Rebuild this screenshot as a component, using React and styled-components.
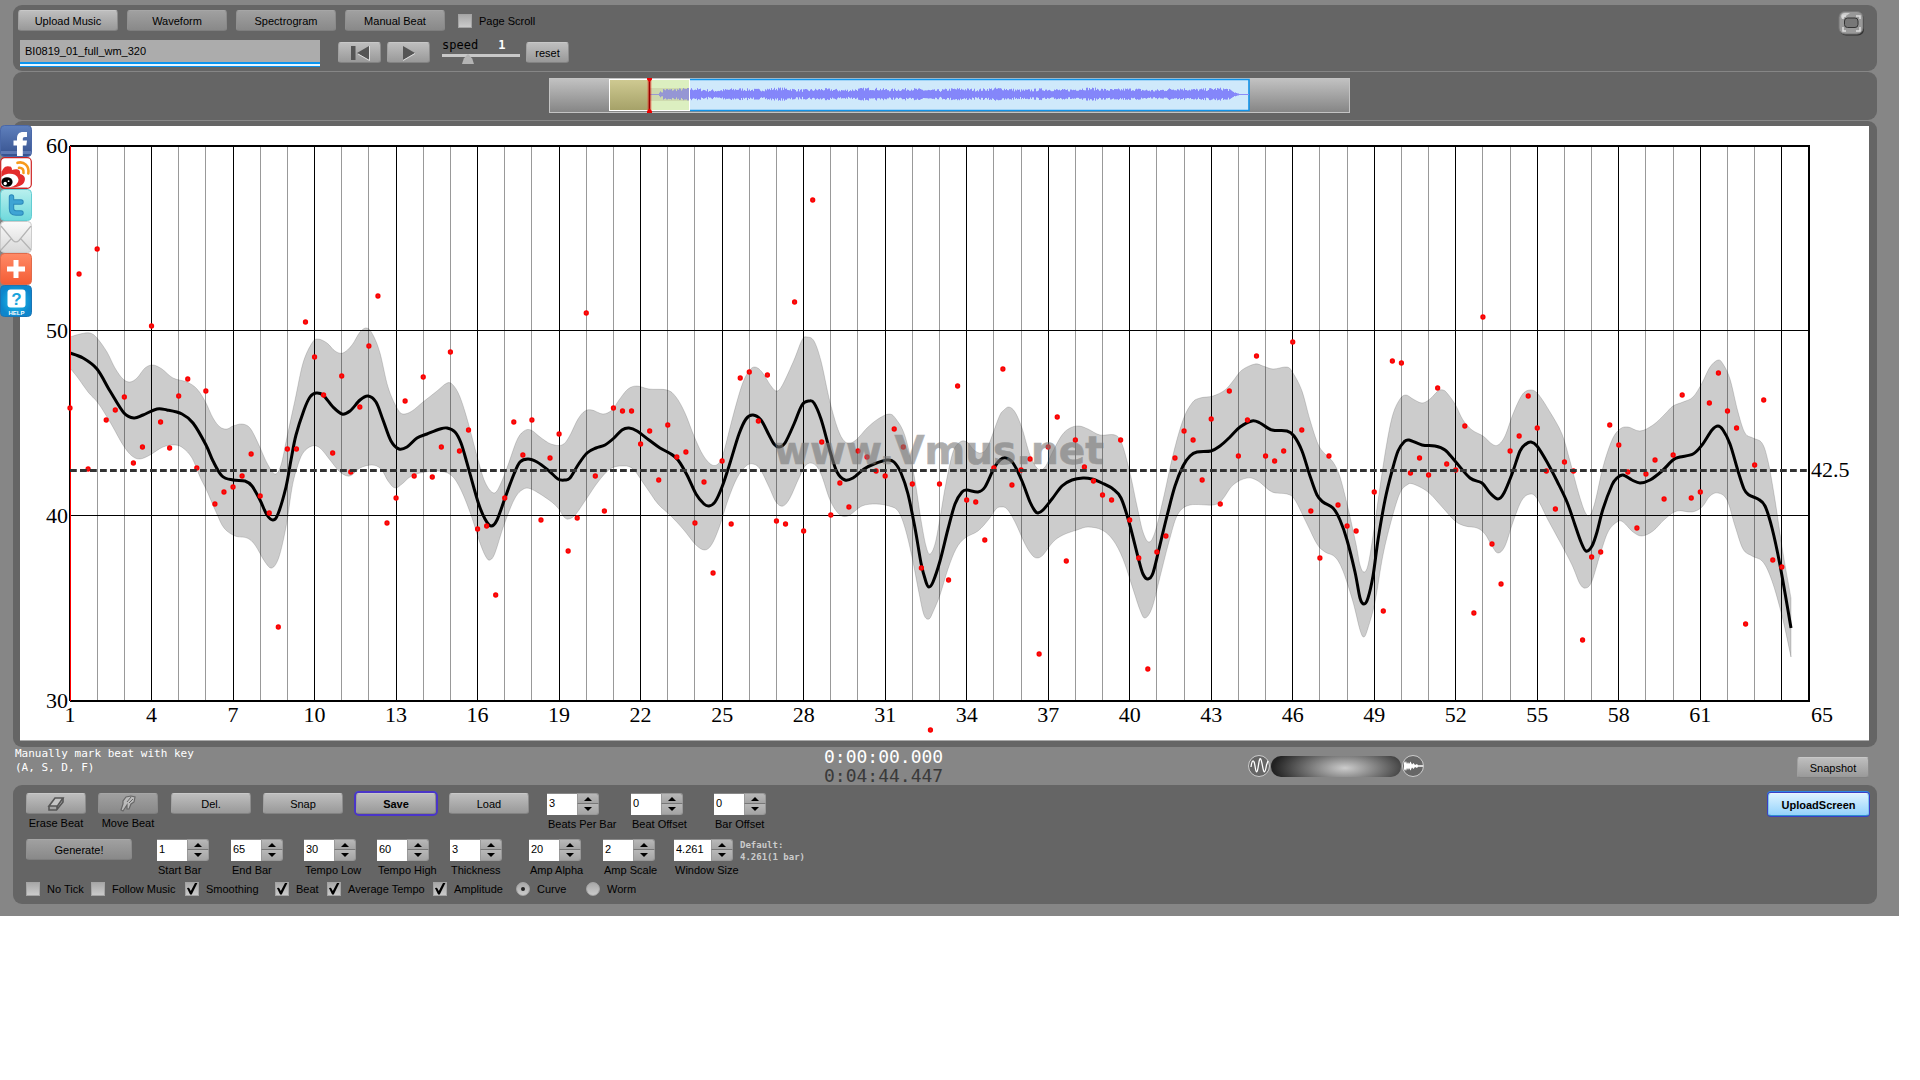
import React, { useState } from 'react';
import styled, { createGlobalStyle, css } from 'styled-components';

const GlobalStyle = createGlobalStyle`
  * {
    box-sizing: border-box;
  }
  body {
    margin: 0;
    background: #fff;
    color: #000;
    font-family: "Liberation Sans", Arial, sans-serif;
    font-size: 11px;
  }
  button, input {
    font: inherit;
    color: inherit;
    margin: 0;
  }
`;

// ---------- Chart data ----------

const beats = [
  408, 274, 469, 249, 420, 410, 397, 463, 447, 326, 422, 448, 396, 379, 468, 391,
  504, 492, 487, 476, 454, 496, 513, 627, 449, 449, 322, 357, 395, 453, 376, 472,
  407, 346, 296, 523, 498, 401, 476, 377, 477, 447, 352, 451, 430, 529, 526, 595,
  498, 422, 455, 420, 520, 458, 434, 551, 518, 313, 476, 511, 408, 411, 411, 444,
  431, 480, 425, 457, 452, 523, 482, 573, 461, 524, 378, 372, 421, 375, 521, 524,
  302, 531, 200, 442, 515, 483, 507, 451, 457, 471, 476, 429, 447, 484, 568, 730,
  484, 580, 386, 500, 502, 540, 468, 369, 485, 470, 459, 654, 447, 417, 561, 440,
  467, 481, 495, 500, 440, 520, 558, 669, 552, 536, 458, 431, 440, 480, 419, 504,
  391, 456, 420, 356, 456, 461, 451, 342, 430, 511, 558, 456, 505, 526, 531, null,
  492, 611, 361, 363, 473, 458, 475, 388, 464, 470, 426, 613, 317, 544, 584, 451,
  436, 396, 428, 471, 509, 462, 471, 640, 557, 552, 425, 445, 472, 528, 474, 460,
  499, 455, 395, 498, 492, 403, 373, 411, 428, 624, 465, 400, 560, 567,
];

const meanLine = [
  70, 353, 83, 358, 97, 369, 110, 391, 124, 413, 134, 418, 143, 415, 157, 409, 167, 410,
  182, 414, 193, 423, 206, 445, 213, 461, 222, 476, 233, 480, 245, 481, 252, 486, 260, 500,
  267, 515, 273, 520, 278, 514, 286, 487, 291, 460, 296, 435, 304, 410, 310, 397, 316, 393,
  323, 395, 333, 407, 342, 414, 350, 411, 360, 400, 368, 396, 376, 402, 383, 420, 391, 441,
  399, 449, 407, 447, 417, 438, 427, 434, 440, 429, 447, 428, 455, 432, 461, 443, 467, 463,
  478, 502, 485, 519, 491, 526, 497, 520, 505, 498, 514, 474, 520, 462, 528, 459, 537, 462,
  548, 470, 558, 479, 565, 480, 570, 478, 578, 465, 587, 453, 596, 448, 605, 445, 614, 438,
  622, 430, 629, 428, 637, 431, 649, 440, 660, 448, 671, 454, 678, 460, 687, 475, 696, 494,
  704, 504, 709, 506, 715, 502, 722, 487, 730, 463, 739, 434, 746, 419, 753, 415, 761, 420,
  769, 435, 774, 444, 779, 447, 785, 443, 794, 424, 802, 405, 809, 401, 814, 403, 821, 419,
  830, 451, 837, 472, 845, 480, 853, 478, 864, 469, 874, 464, 887, 460, 894, 462, 901, 473,
  908, 494, 915, 528, 921, 563, 926, 582, 929, 587, 933, 582, 940, 561, 948, 529, 955, 504,
  962, 492, 967, 490, 978, 492, 985, 487, 994, 468, 1000, 460, 1006, 458, 1013, 463,
  1022, 481, 1030, 502, 1035, 511, 1038, 513, 1043, 510, 1052, 499, 1062, 486, 1072, 480,
  1083, 478, 1092, 479, 1102, 483, 1113, 489, 1121, 498, 1129, 522, 1138, 557, 1143, 574,
  1148, 579, 1153, 573, 1159, 549, 1167, 516, 1175, 486, 1183, 466, 1190, 456, 1197, 452,
  1211, 451, 1220, 446, 1230, 437, 1240, 427, 1252, 421, 1260, 423, 1272, 430, 1287, 431,
  1294, 436, 1302, 451, 1310, 476, 1317, 495, 1323, 502, 1333, 508, 1340, 520, 1347, 540,
  1355, 572, 1360, 598, 1364, 604, 1368, 598, 1373, 576, 1378, 540, 1385, 500, 1392, 471,
  1398, 451, 1404, 442, 1409, 440, 1422, 445, 1435, 446, 1445, 450, 1455, 461, 1470, 478,
  1482, 483, 1490, 493, 1498, 499, 1504, 493, 1512, 474, 1520, 451, 1526, 444, 1531, 442,
  1537, 446, 1547, 462, 1557, 481, 1567, 502, 1575, 525, 1581, 542, 1586, 551, 1592, 546,
  1597, 532, 1603, 509, 1612, 485, 1617, 478, 1623, 475, 1632, 480, 1640, 483, 1650, 480,
  1662, 471, 1673, 460, 1680, 457, 1693, 454, 1702, 445, 1712, 430, 1718, 426, 1723, 430,
  1730, 444, 1738, 471, 1744, 489, 1749, 495, 1758, 499, 1765, 506, 1772, 528, 1780, 565,
  1791, 628,
];

const upperLine = [
  70, 337, 80, 334, 90, 333, 97, 338, 107, 352, 115, 368, 123, 379, 130, 382, 137, 378,
  145, 368, 153, 365, 162, 369, 173, 378, 187, 382, 197, 389, 205, 401, 213, 418, 220, 427,
  227, 429, 233, 426, 242, 424, 250, 428, 258, 443, 267, 463, 275, 474, 281, 465, 287, 437,
  295, 400, 303, 363, 312, 343, 318, 339, 327, 343, 335, 351, 343, 353, 352, 345, 360, 332,
  367, 328, 373, 335, 380, 353, 388, 387, 397, 408, 403, 414, 412, 411, 423, 402, 437, 391,
  447, 383, 453, 385, 460, 397, 468, 422, 477, 456, 485, 482, 494, 493, 501, 483, 508, 465,
  517, 440, 524, 431, 531, 430, 540, 437, 551, 444, 562, 445, 569, 437, 578, 419, 585, 411,
  592, 410, 603, 414, 612, 410, 619, 400, 628, 389, 637, 386, 649, 389, 667, 390, 676, 397,
  685, 413, 694, 436, 703, 455, 712, 465, 719, 463, 724, 451, 733, 416, 742, 385, 749, 371,
  755, 367, 762, 372, 771, 386, 777, 391, 783, 384, 794, 360, 802, 340, 807, 337, 814, 341,
  821, 361, 830, 402, 839, 432, 847, 443, 856, 440, 867, 428, 878, 419, 889, 414, 896, 419,
  905, 436, 914, 475, 921, 520, 926, 546, 930, 554, 935, 544, 940, 518, 946, 483, 953, 452,
  960, 442, 967, 442, 974, 450, 981, 453, 988, 446, 999, 417, 1004, 410, 1009, 407, 1015, 412,
  1022, 428, 1030, 455, 1038, 469, 1045, 467, 1053, 451, 1062, 435, 1070, 428, 1079, 426,
  1088, 429, 1100, 435, 1115, 435, 1122, 444, 1130, 473, 1137, 506, 1143, 532, 1149, 542,
  1155, 532, 1163, 500, 1173, 455, 1183, 420, 1192, 403, 1200, 398, 1213, 396, 1225, 390,
  1233, 381, 1242, 370, 1255, 364, 1263, 366, 1273, 369, 1287, 367, 1293, 373, 1302, 391,
  1310, 420, 1318, 444, 1325, 454, 1333, 462, 1340, 477, 1348, 508, 1356, 544, 1360, 565,
  1364, 572, 1368, 565, 1373, 536, 1380, 487, 1387, 442, 1393, 414, 1400, 399, 1406, 395,
  1413, 399, 1422, 403, 1430, 399, 1438, 391, 1443, 390, 1447, 393, 1455, 404, 1463, 420,
  1472, 430, 1483, 436, 1492, 444, 1498, 445, 1505, 436, 1513, 414, 1522, 395, 1530, 390,
  1538, 394, 1550, 412, 1562, 434, 1570, 461, 1578, 491, 1585, 512, 1590, 515, 1595, 502,
  1603, 467, 1612, 440, 1620, 429, 1628, 427, 1640, 431, 1653, 425, 1665, 414, 1673, 406,
  1683, 402, 1693, 397, 1702, 383, 1710, 367, 1718, 360, 1723, 364, 1730, 379, 1738, 412,
  1745, 433, 1753, 438, 1762, 443, 1768, 461, 1775, 500, 1783, 553, 1791, 598,
];

const lowerLine = [
  70, 368, 78, 378, 88, 392, 98, 403, 110, 422, 123, 445, 132, 456, 140, 459, 150, 455,
  163, 447, 175, 445, 183, 448, 192, 458, 200, 477, 206, 489, 216, 512, 224, 528, 235, 536,
  247, 538, 255, 545, 265, 562, 272, 568, 279, 557, 286, 527, 292, 488, 297, 468, 303, 453,
  312, 446, 320, 448, 330, 460, 340, 472, 350, 476, 360, 468, 372, 465, 381, 469, 388, 481,
  395, 488, 402, 484, 410, 477, 420, 473, 437, 471, 451, 475, 461, 490, 471, 515, 480, 543,
  486, 557, 490, 560, 495, 553, 504, 525, 514, 500, 522, 490, 531, 489, 549, 500, 558, 508,
  564, 517, 569, 519, 576, 514, 587, 498, 598, 482, 610, 469, 622, 466, 633, 469, 646, 487,
  658, 504, 671, 516, 683, 529, 696, 545, 705, 550, 712, 544, 719, 528, 728, 500, 737, 478,
  746, 466, 753, 464, 760, 469, 769, 487, 776, 502, 783, 506, 790, 498, 799, 478, 806, 465,
  814, 464, 821, 474, 830, 500, 839, 514, 848, 516, 862, 506, 876, 504, 889, 506, 898, 511,
  905, 528, 912, 557, 919, 593, 924, 615, 929, 619, 933, 612, 940, 595, 948, 569, 956, 549,
  965, 538, 978, 531, 989, 519, 996, 509, 1001, 507, 1007, 509, 1015, 522, 1025, 544,
  1032, 555, 1037, 558, 1043, 555, 1053, 542, 1063, 535, 1077, 530, 1088, 527, 1102, 530,
  1113, 540, 1123, 559, 1133, 589, 1140, 610, 1145, 618, 1152, 608, 1160, 577, 1170, 538,
  1178, 514, 1190, 505, 1213, 505, 1222, 500, 1233, 485, 1247, 478, 1258, 481, 1272, 492,
  1287, 494, 1295, 500, 1307, 524, 1317, 544, 1325, 552, 1335, 557, 1343, 571, 1353, 602,
  1360, 630, 1364, 637, 1368, 628, 1375, 602, 1383, 555, 1392, 518, 1400, 493, 1407, 485,
  1413, 484, 1428, 492, 1443, 508, 1455, 521, 1465, 526, 1477, 528, 1485, 534, 1492, 546,
  1498, 553, 1505, 546, 1513, 522, 1522, 500, 1531, 494, 1538, 500, 1548, 520, 1560, 542,
  1572, 565, 1580, 584, 1586, 588, 1592, 581, 1600, 555, 1608, 532, 1617, 522, 1623, 522,
  1633, 532, 1642, 536, 1653, 531, 1665, 519, 1677, 511, 1692, 512, 1702, 507, 1710, 496,
  1718, 493, 1727, 500, 1735, 526, 1743, 549, 1752, 556, 1763, 562, 1772, 581, 1782, 616,
  1791, 657,
];

const toPairs = (flat) => {
  const out = [];
  for (let i = 0; i < flat.length; i += 2) out.push([flat[i], flat[i + 1]]);
  return out;
};

// Catmull-Rom spline through the points
const spline = (pts, start = 'M') => {
  let d = `${start}${pts[0][0]} ${pts[0][1]}`;
  for (let i = 0; i < pts.length - 1; i++) {
    const p0 = pts[i - 1] || pts[i];
    const p1 = pts[i];
    const p2 = pts[i + 1];
    const p3 = pts[i + 2] || p2;
    const c = [
      p1[0] + (p2[0] - p0[0]) / 6, p1[1] + (p2[1] - p0[1]) / 6,
      p2[0] - (p3[0] - p1[0]) / 6, p2[1] - (p3[1] - p1[1]) / 6,
    ].map((n) => n.toFixed(1));
    d += `C${c[0]} ${c[1]} ${c[2]} ${c[3]} ${p2[0]} ${p2[1]}`;
  }
  return d;
};

const LEFT = 70;
const RIGHT = 1809;
const TOP = 146;
const BOTTOM = 701;
const barX = (bar) => LEFT + ((bar - 1) * (RIGHT - LEFT)) / 64;

const meanPath = spline(toPairs(meanLine));
const bandPath = `${spline(toPairs(upperLine))}${spline(toPairs(lowerLine).reverse(), 'L')}Z`;
const bars = Array.from({ length: 63 }, (_, i) => i + 2);
const barLabels = Array.from({ length: 21 }, (_, i) => 1 + i * 3);

// waveform of the overview strip
const wavePath = () => {
  let d = '';
  let seed = 7;
  for (let x = 110; x < 690; x++) {
    seed = (seed * 16807) % 2147483647;
    const r = seed / 2147483647;
    const swell = 4.6 + 0.8 * Math.sin(x / 7) + 0.6 * Math.sin(x / 17 + 1);
    const fade = x < 114 ? 0.5 : x > 680 ? (692 - x) / 14 : 1;
    const h = Math.max(1, (swell * 0.7 + r * 3) * fade);
    d += `M${x + 0.5} ${(16.5 - h).toFixed(1)}V${(16.5 + h * 0.9).toFixed(1)}`;
  }
  return d;
};

// ---------- Layout ----------

const Page = styled.div`
  padding-right: 21px;
`;

const Player = styled.main`
  position: relative;
  padding: 5px 22px 12px 13px;
  background: #868686;
`;

const Panel = styled.section`
  background: #656565;
  border-radius: 9px;
  margin-bottom: 1px;
`;

const TopPanel = styled(Panel)`
  display: flex;
  justify-content: space-between;
  align-items: flex-start;
  height: 66px;
  padding: 5px 12px 0 5px;
`;

const WavePanel = styled(Panel)`
  display: flex;
  justify-content: center;
  padding: 6px 0 7px 9px;

  svg {
    display: block;
    width: 801px;
    max-width: 100%;
  }
`;

const ChartPanel = styled(Panel)`
  padding: 5px 8px 6px 7px;
  margin-bottom: 0;
`;

const ChartSvg = styled.svg`
  display: block;
  width: 100%;
  height: auto;
  background: #fff;
  border-bottom: 1px solid #aaa;
  font-family: "Liberation Serif", "Times New Roman", serif;
  font-size: 22px;
`;

const Row = styled.div`
  display: flex;
  align-items: center;
  gap: 9px;
`;

const FileRow = styled.div`
  display: flex;
  align-items: flex-start;
  margin-top: 9px;
  padding-left: 2px;
`;

const Transport = styled.div`
  display: flex;
  gap: 6px;
  padding: 2px 12px 0 18px;
`;

const ResetSlot = styled.div`
  padding: 2px 0 0 6px;
`;

// ---------- Controls ----------

const Button = styled.button`
  display: flex;
  align-items: center;
  justify-content: center;
  width: ${({ $width }) => $width}px;
  height: 21px;
  padding: 0;
  border: 1px solid;
  border-color: #c8c8c8 #8c8c8c #828282 #a0a0a0;
  border-radius: 3px;
  background: linear-gradient(#bebebe, #999);
  white-space: nowrap;

  ${({ $dim }) => $dim && css`
    border-color: #a6a6a6 #8a8a8a #7e7e7e #909090;
    background: linear-gradient(#a0a0a0, #898989);
  `}
  ${({ $focus }) => $focus && css`
    font-weight: 700;
    box-shadow: 0 0 0 2px #4a35c8, 0 -1px 0 1px #3c86dc;
  `}
  ${({ $primary }) => $primary && css`
    height: 23px;
    border-color: #e8f6ff #7ec4f0 #2f8fd0;
    background: linear-gradient(#dcf2ff, #95d3fb);
    font-weight: 700;
    box-shadow: 0 0 0 1px #3a3fc4, 0 -1px 0 1px #2f86e0;
  `}
`;

const FileInput = styled.input`
  width: 300px;
  height: 27px;
  padding: 0 5px 4px;
  border: 0;
  border-bottom: 1px solid #0a8fe8;
  background: #acacac;
  box-shadow: inset 0 -2px 0 #e8f6ff, inset 0 -4px 0 #0a95f0;
  outline: none;
`;

const SpeedBox = styled.div`
  width: 78px;
  margin-top: -3px;
`;

const SpeedText = styled.label`
  display: flex;
  gap: 20px;
  height: 14px;
  font: 12px/16px "DejaVu Sans Mono", monospace;

  output {
    color: #fff;
    font-weight: 700;
  }
`;

const SpeedRange = styled.input`
  display: block;
  width: 78px;
  height: 14px;
  appearance: none;
  background: linear-gradient(#c8c8c8, #c8c8c8) 0 3px / 100% 3px no-repeat;

  &::-webkit-slider-thumb {
    appearance: none;
    width: 12px;
    height: 10px;
    margin-top: 2px;
    background: #b4b4b4;
    clip-path: polygon(50% 0, 85% 45%, 100% 100%, 0 100%, 15% 45%);
  }
`;

const boxStyle = css`
  appearance: none;
  flex: none;
  width: 14px;
  height: 14px;
  border: 1px solid #a4a4a4;
  background: linear-gradient(#a8a8a8, #cacaca);
`;

const CheckBox = styled.input`
  ${boxStyle}

  &:checked::before {
    content: '';
    display: block;
    width: 12px;
    height: 12px;
    background: #000;
    clip-path: polygon(8% 42%, 25% 40%, 40% 66%, 75% 0, 95% 0, 48% 96%, 34% 96%);
  }
`;

const Radio = styled.input`
  ${boxStyle}
  border-radius: 50%;

  &:checked::before {
    content: '';
    display: block;
    width: 4px;
    height: 4px;
    margin: 4px;
    border-radius: 50%;
    background: #222;
  }
`;

const OptionLabel = styled.label`
  display: flex;
  align-items: center;
  gap: 7px;
  height: 14px;
  padding-left: ${({ $indent }) => $indent || 0}px;
  white-space: nowrap;
`;

const FullscreenButton = styled.button`
  width: 27px;
  height: 25px;
  margin-top: 1px;
  padding: 0;
  border: 0;
  background: none;
`;

const SocialBar = styled.nav`
  position: absolute;
  left: 0;
  top: 125px;
  display: flex;
  flex-direction: column;

  a, svg {
    display: block;
    width: 32px;
    height: 32px;
  }
`;

// ---------- Status line ----------

const StatusBar = styled.div`
  display: grid;
  grid-template-columns: 811fr 424fr 549fr auto;
  height: 38px;
  padding-right: 8px;
`;

const Hint = styled.p`
  margin: 0;
  padding-left: 2px;
  color: #fff;
  font: 11px/14px "DejaVu Sans Mono", monospace;
`;

const Clock = styled.div`
  color: ${({ $total }) => ($total ? '#3a3a3a' : '#fff')};
  font: 18px/19px "DejaVu Sans Mono", monospace;
`;

const ZoomControl = styled.div`
  display: flex;
  align-items: center;

  svg {
    width: 23px;
    height: 24px;
  }
`;

const ZoomRange = styled.input`
  width: 130px;
  height: 21px;
  appearance: none;
  border-radius: 10px;
  background: radial-gradient(ellipse 72px 26px at 74px 12px, #ccc, #777 50%, #222 100%);

  &::-webkit-slider-thumb {
    appearance: none;
    width: 1px;
    height: 1px;
  }
`;

const SnapshotSlot = styled.div`
  padding-top: 10px;
`;

// ---------- Bottom panel ----------

const ControlPanel = styled(Panel)`
  display: flex;
  justify-content: space-between;
  align-items: flex-start;
  margin-bottom: 0;
  padding: 8px 8px 8px 13px;
`;

const ControlGrid = styled.div`
  display: grid;
  grid-template-columns: ${({ $columns }) => $columns};
  height: ${({ $height }) => $height}px;
`;

const Caption = styled.div`
  margin-top: 2px;
  padding-left: ${({ $center }) => ($center ? 0 : 1)}px;
  line-height: 14px;
  text-align: ${({ $center }) => ($center ? 'center' : 'left')};
  white-space: nowrap;
`;

const ToolCell = styled.div`
  width: 60px;
`;

const Field = styled.label`
  display: block;
  width: 52px;
`;

const SpinnerBox = styled.div`
  display: flex;
  width: ${({ $wide }) => ($wide ? 59 : 52)}px;
  height: 22px;

  input {
    flex: 1;
    min-width: 0;
    padding: 0 2px 4px;
    border: 0;
    border-top: 1px solid #888;
    background: #fff;
    appearance: textfield;
    outline: none;
  }
  input::-webkit-inner-spin-button {
    appearance: none;
  }
`;

const Steps = styled.div`
  display: grid;
  grid-template-rows: 1fr 1fr;
  width: 22px;

  button {
    display: flex;
    align-items: center;
    justify-content: center;
    padding: 0;
    border: 1px solid #999;
    background: linear-gradient(#b8b8b8, #a4a4a4);
  }
  button:first-child {
    border-radius: 0 3px 0 0;
    border-bottom-color: #777;
  }
  button:last-child {
    border-top: 0;
    border-radius: 0 0 3px 0;
  }
`;

const DefaultNote = styled.p`
  margin: 0;
  color: #ccc;
  font: 700 9px/12px "DejaVu Sans Mono", monospace;
  white-space: nowrap;
`;

// ---------- Pieces ----------

const Spinner = ({ label, value, wide }) => {
  const [current, setCurrent] = useState(value);
  const step = (by) => setCurrent((v) => Number((v + by).toFixed(3)));

  return (
    <Field>
      <SpinnerBox $wide={wide}>
        <input
          type="number"
          step="any"
          aria-label={label}
          value={current}
          onChange={(e) => setCurrent(Number(e.target.value))}
        />
        <Steps>
          <button type="button" aria-label={`${label} up`} onClick={() => step(1)}>
            <svg width="8" height="4"><path d="M0 4L4 0L8 4Z" /></svg>
          </button>
          <button type="button" aria-label={`${label} down`} onClick={() => step(-1)}>
            <svg width="8" height="4"><path d="M0 0L4 4L8 0Z" /></svg>
          </button>
        </Steps>
      </SpinnerBox>
      <Caption>{label}</Caption>
    </Field>
  );
};

const Check = ({ label, on, indent }) => (
  <OptionLabel $indent={indent}>
    <CheckBox type="checkbox" defaultChecked={on} />
    {label}
  </OptionLabel>
);

const TempoChart = () => (
  <ChartSvg viewBox="20 126 1849 614" role="img" aria-label="Tempo curve">
    <g shapeRendering="crispEdges">
      {bars.map((bar) => (
        <line
          key={bar}
          x1={barX(bar)}
          x2={barX(bar)}
          y1={TOP}
          y2={BOTTOM}
          stroke={bar % 3 === 1 ? '#000' : '#999'}
        />
      ))}
      <path d={`M${LEFT} 330.5H${RIGHT}M${LEFT} 515.5H${RIGHT}`} stroke="#000" />
      <path d={`M${LEFT} ${TOP}H${RIGHT}V${BOTTOM}H${LEFT}`} fill="none" stroke="#000" strokeWidth="2" />
    </g>
    <path d={bandPath} fill="#000" fillOpacity="0.2" stroke="#000" strokeOpacity="0.15" />
    <path d={meanPath} fill="none" stroke="#000" strokeWidth="3" />
    <path d={`M${LEFT} ${TOP}V${BOTTOM}`} stroke="#000" strokeWidth="2" />
    <path d={`M${LEFT + 0.5} ${TOP}V${BOTTOM}`} stroke="#f00" />
    {beats.map((y, i) => y !== null && (
      <circle key={i} cx={LEFT + (i * (RIGHT - LEFT)) / 192} cy={y} r="1.7" fill="#b44" stroke="#f00" strokeWidth="1.9" />
    ))}
    <path d={`M${LEFT} 470.5H${RIGHT}`} stroke="#333" strokeWidth="2.8" strokeDasharray="6.8 3.2" />
    <text
      x="774"
      y="464"
      fill="#787878"
      stroke="#787878"
      strokeWidth="0.6"
      opacity="0.6"
      fontFamily="DejaVu Sans"
      fontWeight="700"
      fontSize="39"
    >
      www.Vmus.net
    </text>
    {[60, 50, 40, 30].map((n) => (
      <text key={n} x="68" y={153 + (60 - n) * 18.5} textAnchor="end">{n}</text>
    ))}
    {barLabels.map((n) => (
      <text key={n} x={barX(n)} y="722" textAnchor="middle">{n}</text>
    ))}
    <text x="1811" y="722">65</text>
    <text x="1811" y="477">42.5</text>
  </ChartSvg>
);

const Overview = () => (
  <svg viewBox="0 0 801 35" role="img" aria-label="Waveform overview">
    <defs>
      <linearGradient id="strip" x2="0" y2="1">
        <stop stopColor="#c2c2c2" />
        <stop offset="1" stopColor="#858585" />
      </linearGradient>
      <linearGradient id="olive" x2="0" y2="1">
        <stop stopColor="#cfca92" />
        <stop offset="1" stopColor="#a5a168" />
      </linearGradient>
    </defs>
    <rect x="0.5" y="0.5" width="800" height="34" fill="url(#strip)" stroke="#c4c4c4" />
    <rect x="61" y="1.5" width="40" height="31" fill="url(#olive)" />
    <rect x="101" y="1.5" width="599" height="31" fill="#cfe9fb" />
    <path d="M141 1.5H700V32.5H141" fill="none" stroke="#1192e8" strokeWidth="1.6" />
    <rect x="101" y="1.5" width="40" height="31" fill="#dcefc0" />
    <path d={wavePath()} stroke="#8486fa" />
    <path d="M101 16.5H115M685 16.5H700" stroke="#8a8cf8" />
    <rect x="101" y="10" width="40" height="13" fill="#b4b48c" fillOpacity="0.35" />
    <rect x="60.5" y="1.5" width="80" height="31" fill="none" stroke="#fff" />
    <path d="M100.5 1V33" stroke="#f00" strokeOpacity="0.35" strokeWidth="4" />
    <path d="M100.5 1V33" stroke="#900" strokeWidth="1.6" />
    <path d="M98 0H103V1.5L100.5 4L98 1.5ZM98 35H103V33L100.5 30.5L98 33Z" fill="#e00" />
  </svg>
);

const Social = () => (
  <SocialBar aria-label="Share">
    <a href="#facebook" aria-label="Facebook">
      <svg viewBox="0 0 32 32">
        <defs>
          <linearGradient id="fb" x2="0" y2="1"><stop stopColor="#5f80bd" /><stop offset="1" stopColor="#36528f" /></linearGradient>
        </defs>
        <rect x="0.5" y="0.5" width="31" height="31" rx="4" fill="url(#fb)" stroke="#4a68a8" />
        <path d="M1 27.500H31" stroke="#5f7ab4" strokeWidth="3" />
        <path d="M17 31V20.500H13.500V15.500H17V13.500C17 9 19.500 7 23 7H27V12H25C23.300 12 22.800 12.700 22.800 14V15.500H27L26.300 20.500H22.800V31Z" fill="#fff" />
      </svg>
    </a>
    <a href="#weibo" aria-label="Weibo">
      <svg viewBox="0 0 32 32">
        <rect x="0.7" y="0.7" width="30.6" height="30.6" rx="4" fill="#fff" stroke="#c22" strokeWidth="1.2" />
        <path d="M1.500 17C2 12 5 8.500 9 9.500C12 9 12 12 12 13C16 11.500 21 12 20 17C25 18 26 22 24 25.500C22 29 17 30.500 11 30.500H2Z" fill="#e32c2c" />
        <ellipse cx="9" cy="23.500" rx="9.500" ry="6.800" fill="#fff" transform="rotate(-8 9 23.500)" />
        <ellipse cx="7" cy="25" rx="5.600" ry="4.800" fill="#000" />
        <circle cx="5.200" cy="26.500" r="1.700" fill="#fff" />
        <circle cx="8.600" cy="24.200" r="0.900" fill="#fff" />
        <path d="M17.500 5.800C24 4 29.500 9 28.300 16.500M19 10.800C22 10.500 24 12.500 23.500 16" fill="none" stroke="#f79a1b" strokeWidth="2.600" strokeLinecap="round" />
        <path d="M0.700 14V27Q0.700 31.300 5 31.300H27" fill="none" stroke="#c22" strokeWidth="1.200" />
      </svg>
    </a>
    <a href="#twitter" aria-label="Twitter">
      <svg viewBox="0 0 32 32">
        <defs>
          <linearGradient id="tw" x2="0" y2="1"><stop stopColor="#b9f0ee" /><stop offset="1" stopColor="#6fd9dc" /></linearGradient>
        </defs>
        <rect x="0.5" y="0.5" width="31" height="31" rx="4" fill="url(#tw)" stroke="#62cdd2" />
        <path d="M11.500 8V19.500Q11.500 24 16 24H21M11.500 13H21" fill="none" stroke="#2a86b8" strokeWidth="5.400" strokeLinecap="round" />
        <path d="M11.500 8V19.500Q11.500 24 16 24H21M11.500 13H21" fill="none" stroke="#3fa4d4" strokeWidth="3.600" strokeLinecap="round" />
      </svg>
    </a>
    <a href="#mail" aria-label="Mail">
      <svg viewBox="0 0 32 32">
        <defs>
          <linearGradient id="ml" x2="0" y2="1"><stop stopColor="#fafafa" /><stop offset="1" stopColor="#d8d8d8" /></linearGradient>
        </defs>
        <rect x="0.5" y="0.5" width="31" height="31" rx="4" fill="url(#ml)" stroke="#ccc" />
        <path d="M1 5L13 19.500Q16 22.500 19 19.500L31 5M1 29L11 18M31 29L21 18" fill="none" stroke="#b4b4b4" strokeWidth="1.200" />
      </svg>
    </a>
    <a href="#more" aria-label="More">
      <svg viewBox="0 0 32 32">
        <defs>
          <linearGradient id="mr" x2="0" y2="1"><stop stopColor="#ff8a66" /><stop offset="1" stopColor="#f45c34" /></linearGradient>
        </defs>
        <rect x="0.5" y="0.5" width="31" height="31" rx="4" fill="url(#mr)" stroke="#e06a4a" />
        <path d="M16 7V25M7 16H25" stroke="#fff" strokeWidth="5" />
      </svg>
    </a>
    <a href="#help" aria-label="Help">
      <svg viewBox="0 0 32 32">
        <defs>
          <radialGradient id="hp"><stop stopColor="#1ec4ee" /><stop offset="1" stopColor="#0d86cc" /></radialGradient>
        </defs>
        <rect x="0.5" y="0.5" width="31" height="31" rx="4" fill="url(#hp)" stroke="#1b74b4" />
        <rect x="7.5" y="4.5" width="18" height="18" rx="3" fill="#fff" />
        <text x="16.500" y="19.500" textAnchor="middle" fill="#18a4dc" fontFamily="Liberation Sans" fontWeight="700" fontSize="17">?</text>
        <text x="16.500" y="29.500" textAnchor="middle" fill="#fff" fontFamily="Liberation Sans" fontWeight="700" fontSize="6">HELP</text>
      </svg>
    </a>
  </SocialBar>
);

// ---------- Main Component ----------

const App = () => {
  const [speed, setSpeed] = useState(1);

  return (
    <Page>
      <GlobalStyle />
      <Player>
        <TopPanel>
          <div>
            <Row>
              <Button $width={100}>Upload Music</Button>
              <Button $width={100} $dim>Waveform</Button>
              <Button $width={100} $dim>Spectrogram</Button>
              <Button $width={100} $dim>Manual Beat</Button>
              <Check label="Page Scroll" indent={4} />
            </Row>
            <FileRow>
              <FileInput aria-label="Track" defaultValue="BI0819_01_full_wm_320" />
              <Transport>
                <Button $width={43} aria-label="Rewind">
                  <svg width="22" height="16">
                    <path d="M2 1H6.500V15H2ZM20 1V15L8 8Z" fill="#555" />
                    <path d="M20.500 1V15.500L9 9" fill="none" stroke="#ddd" />
                  </svg>
                </Button>
                <Button $width={43} aria-label="Play">
                  <svg width="14" height="16">
                    <path d="M1 1V15L13 8Z" fill="#555" />
                    <path d="M1 15.500L13 8.500" stroke="#ddd" />
                  </svg>
                </Button>
              </Transport>
              <SpeedBox>
                <SpeedText htmlFor="speed">
                  speed <output>{speed}</output>
                </SpeedText>
                <SpeedRange
                  id="speed"
                  type="range"
                  min="0"
                  max="3.3"
                  step="0.1"
                  value={speed}
                  onChange={(e) => setSpeed(Number(e.target.value))}
                />
              </SpeedBox>
              <ResetSlot>
                <Button $width={43} onClick={() => setSpeed(1)}>reset</Button>
              </ResetSlot>
            </FileRow>
          </div>
          <FullscreenButton aria-label="Full screen">
            <svg width="27" height="25">
              <rect x="2" y="2" width="24" height="22.5" rx="6" fill="#333" />
              <rect x="1" y="0.5" width="24" height="22.5" rx="6" fill="#999" stroke="#777" />
              <path d="M3 6Q3 2 7 2H12L4 8Z" fill="#ccc" />
              <rect x="6.5" y="7" width="13.5" height="9.5" rx="3" fill="#777" stroke="#333" />
              <path d="M5 8V5H8M18 5H22V8M5 16V20H8M22 16V20H18" fill="none" stroke="#ddd" strokeWidth="1.5" />
            </svg>
          </FullscreenButton>
        </TopPanel>

        <WavePanel>
          <Overview />
        </WavePanel>

        <ChartPanel>
          <TempoChart />
        </ChartPanel>

        <StatusBar>
          <Hint>
            Manually mark beat with key
            <br />
            (A, S, D, F)
          </Hint>
          <div>
            <Clock>0:00:00.000</Clock>
            <Clock $total>0:04:44.447</Clock>
          </div>
          <ZoomControl>
            <svg viewBox="0 0 23 24">
              <circle cx="11" cy="12" r="10.5" fill="#666" stroke="#ccc" />
              <path d="M3 13C4 5 6 5 7 12S9 21 10.500 11S13 4 14.500 12S17 20 18.500 11L20 7" fill="none" stroke="#fff" strokeWidth="1.3" />
            </svg>
            <ZoomRange type="range" aria-label="Zoom" />
            <svg viewBox="0 0 23 24">
              <circle cx="12" cy="12" r="10.5" fill="#666" stroke="#ccc" />
              <path d="M3 7L4 9L5 7L6 10L7 8L8 10L9.500 7.500L11 10.500L12.500 9L14 11L16 10L17 11.300H22V12.700H17L16 14L14 13L12.500 15L11 13.500L9.500 16.500L8 14L7 16L6 14L5 17L4 15L3 17Z" fill="#fff" />
            </svg>
          </ZoomControl>
          <SnapshotSlot>
            <Button $width={72}>Snapshot</Button>
          </SnapshotSlot>
        </StatusBar>

        <ControlPanel>
          <div>
            <ControlGrid $columns="72px 73px 92px 93px 93px 98px 84px 83px auto" $height={46}>
              <ToolCell>
                <Button $width={60} aria-label="Erase Beat">
                  <svg width="18" height="16" fill="none" stroke="#555" strokeWidth="1.6">
                    <path d="M2 10L8 2H16L10.500 10Z" fill="#c4c4c4" />
                    <path d="M2 10V14H9.500L16 6V2M10 10V14" />
                  </svg>
                </Button>
                <Caption $center>Erase Beat</Caption>
              </ToolCell>
              <ToolCell>
                <Button $width={60} $dim aria-label="Move Beat">
                  <svg width="18" height="17">
                    <path d="M7 2L4 6V9L2 15L4 16L8 10L8 14L10 14L12 9L15 7L16 2L12 1Z" fill="#bbb" stroke="#666" strokeWidth="1.2" />
                    <path d="M12 2L8 7M14 4L10 8" stroke="#666" />
                  </svg>
                </Button>
                <Caption $center>Move Beat</Caption>
              </ToolCell>
              <Button $width={80}>Del.</Button>
              <Button $width={80}>Snap</Button>
              <Button $width={80} $focus>Save</Button>
              <Button $width={80}>Load</Button>
              <Spinner label="Beats Per Bar" value={3} />
              <Spinner label="Beat Offset" value={0} />
              <Spinner label="Bar Offset" value={0} />
            </ControlGrid>

            <ControlGrid $columns="131px 74px 73px 73px 73px 79px 74px 71px 66px auto" $height={43}>
              <Button $width={106} $dim>Generate!</Button>
              <Spinner label="Start Bar" value={1} />
              <Spinner label="End Bar" value={65} />
              <Spinner label="Tempo Low" value={30} />
              <Spinner label="Tempo High" value={60} />
              <Spinner label="Thickness" value={3} />
              <Spinner label="Amp Alpha" value={20} />
              <Spinner label="Amp Scale" value={2} />
              <Spinner label="Window Size" value={4.261} wide />
              <DefaultNote>
                Default:
                <br />
                4.261(1 bar)
              </DefaultNote>
            </ControlGrid>

            <ControlGrid $columns="65px 94px 90px 52px 106px 83px 70px auto" $height={14}>
              <Check label="No Tick" />
              <Check label="Follow Music" />
              <Check label="Smoothing" on />
              <Check label="Beat" on />
              <Check label="Average Tempo" on />
              <Check label="Amplitude" on />
              <OptionLabel>
                <Radio type="radio" name="view" defaultChecked />
                Curve
              </OptionLabel>
              <OptionLabel>
                <Radio type="radio" name="view" />
                Worm
              </OptionLabel>
            </ControlGrid>
          </div>
          <Button $width={101} $primary>UploadScreen</Button>
        </ControlPanel>

        <Social />
      </Player>
    </Page>
  );
};

export default App;
